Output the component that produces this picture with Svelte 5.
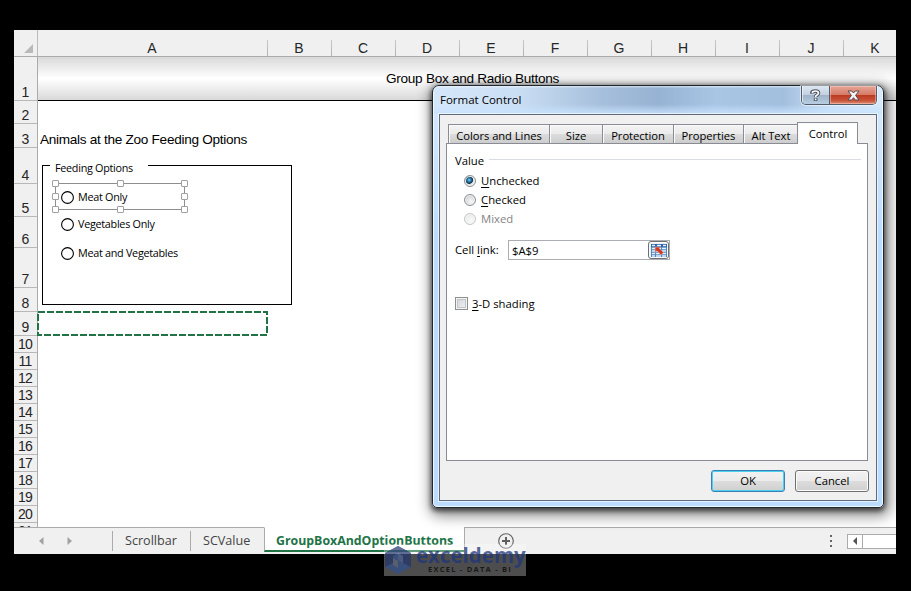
<script>
	const columns = ['A', 'B', 'C', 'D', 'E', 'F', 'G', 'H', 'I', 'J', 'K']

	const row_heights = [44, 23, 24, 36, 33, 31, 40, 24, 24, 17, 17, 17, 17, 17, 17, 17, 17, 17, 17, 17, 17]

	const options = [
		{ label: 'Meat Only', kind: 'first' },
		{ label: 'Vegetables Only', kind: 'second' },
		{ label: 'Meat and Vegetables', kind: 'third' }
	]

	const handles = ['nw', 'n', 'ne', 'w', 'e', 'sw', 's', 'se']

	const tabs = [
		{ name: 'Colors and Lines', id: 'colors' },
		{ name: 'Size', id: 'size' },
		{ name: 'Protection', id: 'protection' },
		{ name: 'Properties', id: 'properties' },
		{ name: 'Alt Text', id: 'alt' },
		{ name: 'Control', id: 'control' }
	]

	const values = [
		{ key: 'U', rest: 'nchecked' },
		{ key: 'C', rest: 'hecked' },
		{ key: '', rest: 'Mixed', disabled: true }
	]

	let active_tab = $state('control')
	let value = $state('nchecked')
</script>

<div class="screen">
	<div class="workbook">
		<div class="col-headers">
			<div class="corner">
				<svg width="9" height="9" viewBox="0 0 9 9"><path d="M9 0V9H0Z" fill="#b9b9b9" /></svg>
			</div>
			{#each columns as column}
				<div class="col-header" class:wide={column == 'A'}>{column}</div>
			{/each}
		</div>

		<div class="grid">
			<div class="row-headers">
				{#each row_heights as height, i}
					<div class="row-header" style="height: {height}px">{i + 1}</div>
				{/each}
			</div>
			<div class="sheet">
				<div class="title-row"><span>Group Box and Radio Buttons</span></div>
				<div class="heading">Animals at the Zoo Feeding Options</div>

				<!-- form controls float over the cells -->
				<div class="group-box">
					<span class="legend">Feeding Options</span>
					{#each options as option}
						<div class="option {option.kind}">
							<svg width="13" height="13" viewBox="0 0 13 13">
								<circle cx="6.5" cy="6.5" r="5.9" fill="#fff" stroke="#000" stroke-width="1.1" />
							</svg>
							<span>{option.label}</span>
						</div>
					{/each}
					<div class="selection">
						{#each handles as handle}
							<i class="handle {handle}"></i>
						{/each}
					</div>
				</div>

				<svg class="marquee" width="231" height="26" viewBox="0 0 231 26">
					<rect
						x="1"
						y="1"
						width="229"
						height="23"
						fill="none"
						stroke="#217346"
						stroke-width="2"
						stroke-dasharray="7 2"
					/>
				</svg>
			</div>
		</div>

		<div class="sheet-bar">
			<div class="sheet-nav">
				<svg width="5" height="8" viewBox="0 0 5 8"><path d="M4.5 0V8L0 4Z" fill="#a2a2a2" /></svg>
				<svg width="5" height="8" viewBox="0 0 5 8"><path d="M.5 0V8L5 4Z" fill="#a2a2a2" /></svg>
			</div>
			<div class="sheet-tab scrollbar-tab"><span>Scrollbar</span></div>
			<div class="sheet-tab scvalue-tab"><span>SCValue</span></div>
			<div class="sheet-tab current"><span>GroupBoxAndOptionButtons</span></div>
			<div class="sheet-rest">
				<svg class="add" width="16" height="16" viewBox="0 0 16 16" fill="none" stroke="#5f5f5f">
					<circle cx="8" cy="8" r="7.3" stroke-width="1.1" />
					<path d="M8 4V12M4 8H12" stroke-width="2" />
				</svg>
				<div class="grip"><i></i><i></i><i></i></div>
				<div class="h-scroll">
					<div class="h-arrow">
						<svg width="4" height="8" viewBox="0 0 4 8"><path d="M4 0V8L0 4Z" fill="#555" /></svg>
					</div>
					<div class="h-thumb"></div>
				</div>
			</div>
		</div>

		<div class="dialog" role="dialog" aria-label="Format Control">
			<div class="title-bar">
				<span class="title">Format Control</span>
				<div class="caption-buttons">
					<div class="help">
						<svg width="11" height="13" viewBox="0 0 11 13" fill="none">
							<path d="M2 4.8V3.2Q2.6 2 5.5 2T8.5 4Q8.5 5.3 7 6Q5.6 6.6 5.6 8M5.6 9V12" stroke="#4b5260" stroke-width="3.6" />
							<path d="M2.5 4.3V3.2Q2.8 2 5.5 2T8.5 4Q8.5 5.3 7 6Q5.6 6.6 5.6 8M5.6 9.6V11.3" stroke="#fff" stroke-width="1.7" />
						</svg>
					</div>
					<div class="close">
						<svg width="13" height="11" viewBox="0 0 13 11">
							<path
								d="M1 1H4.7L6.5 3L8.3 1H12L8.6 5.4L12 10H8.3L6.5 7.7L4.7 10H1L4.4 5.4Z"
								fill="#f4f4f4"
								stroke="#5b4a52"
							/>
						</svg>
					</div>
				</div>
			</div>

			<div class="client">
				<div class="tabs">
					{#each tabs as tab}
						<div
							class="tab {tab.id}"
							class:active={active_tab == tab.id}
							role="tab"
							tabindex="-1"
							aria-selected={active_tab == tab.id}
							onclick={() => (active_tab = tab.id)}
							onkeydown={() => {}}
						>
							<span>{tab.name}</span>
						</div>
					{/each}
				</div>

				<div class="page">
					<div class="section"><span>Value</span><hr /></div>
					<div class="radios">
						{#each values as item}
							<div
								class="radio"
								class:disabled={item.disabled}
								role="radio"
								tabindex="-1"
								aria-checked={value == item.rest}
								onclick={() => {
									if (!item.disabled) value = item.rest
								}}
								onkeydown={() => {}}
							>
								<i class="dot" class:checked={value == item.rest}></i>
								<span><u>{item.key}</u>{item.rest}</span>
							</div>
						{/each}
					</div>
					<div class="link-row">
						<span class="link-label">Cell <u>l</u>ink:</span>
						<div class="link-field">
							<span>$A$9</span>
							<div class="picker">
								<svg width="16" height="13" viewBox="0 0 16 13">
									<rect width="16" height="13" fill="#4f86c6" />
									<rect width="16" height="3" fill="#2c64ae" />
									<path
										d="M1 1.5H4M6 1.5H10M12 1.5H15M1 4.5H4M5 4.5H10M11 4.5H15M1 7H4M5 7H10M11 7H15M1 9.5H4M5 9.5H10M11 9.5H15M1 12H4M5 12H10M11 12H15"
										stroke="#e6f1fc"
										stroke-width="1.5"
									/>
									<path d="M4 3H9.5L8.3 4.5L12.5 8.6L10 11L6 6.8L4.4 8.3Z" fill="#cf3b22" stroke="#f3b7a4" stroke-width=".5" />
								</svg>
							</div>
						</div>
					</div>
					<div class="shading"><i class="box"></i><span><u>3</u>-D shading</span></div>
				</div>

				<div class="buttons">
					<div class="button default"><span>OK</span></div>
					<div class="button"><span>Cancel</span></div>
				</div>
			</div>
		</div>
	</div>

	<div class="watermark">
		<svg width="28" height="30" viewBox="0 0 28 30">
			<path d="M14 1L27 8V22L14 29L1 22V8Z" fill="#31508f" />
			<path d="M14 1L27 8V22L19 18V11L14 8L9 11V18L1 22V8Z" fill="#22366f" />
			<path d="M9 13L14 16V23L9 20Z" fill="#5d6878" />
			<path d="M14 8L19 11V18L14 15Z" fill="#4b6096" />
		</svg>
		<div class="brand">
			<span class="name">exceldemy</span>
			<span class="tagline">EXCEL - DATA - BI</span>
		</div>
	</div>
</div>

<style>
	:global(body) {
		margin: 0;
		background: #000;
	}
	.screen {
		position: relative;
		width: 911px;
		height: 591px;
		box-sizing: border-box;
		padding: 30px 15px 37px 14px;
		background: #000;
		overflow: hidden;
		font-family: 'Open Sans', 'Noto Sans', sans-serif;
		font-size: 11.3px;
		color: #000;
		white-space: nowrap;
		cursor: default;
	}
	.screen * {
		box-sizing: border-box;
	}
	.workbook {
		position: relative;
		display: flex;
		flex-direction: column;
		width: 882px;
		height: 524px;
		background: #fff;
		overflow: hidden;
	}

	/* column and row headers */
	.col-headers {
		display: flex;
		height: 27px;
		flex: none;
		background: #f0f0f0;
		border-bottom: 1px solid #ababab;
		font-family: 'Liberation Sans', Arial, sans-serif;
		font-size: 14px;
		color: #262626;
	}
	.corner {
		flex: none;
		display: flex;
		align-items: flex-end;
		justify-content: flex-end;
		width: 24px;
		padding: 0 4px 3px 0;
		border-right: 1px solid #bbb;
	}
	.col-header {
		flex: none;
		width: 64px;
		padding: 10px 2px 0 0;
		line-height: 17px;
		text-align: center;
		background: linear-gradient(#c9c9c9, #b1b1b1) right bottom / 1px 16px no-repeat;
	}
	.col-header.wide {
		width: 230px;
	}
	.grid {
		display: flex;
		height: 470px;
		flex: none;
		overflow: hidden;
	}
	.row-headers {
		flex: none;
		width: 24px;
		background: #f0f0f0;
		border-right: 1px solid #ababab;
		font-family: 'Liberation Sans', Arial, sans-serif;
		font-size: 14px;
		letter-spacing: -0.7px;
		color: #262626;
	}
	.row-header {
		display: flex;
		align-items: flex-end;
		justify-content: center;
		line-height: 15px;
		padding-right: 1px;
		border-bottom: 1px solid #b8b8b8;
	}
	.sheet {
		position: relative;
		flex: 1;
		font-family: 'Liberation Sans', Arial, sans-serif;
		font-size: 13.6px;
	}
	.title-row {
		height: 44px;
		border-bottom: 1px solid #000;
		background: linear-gradient(#d9d9d9, #fff 50%, #d9d9d9);
		padding-left: 348px;
		line-height: 43px;
		letter-spacing: -0.28px;
	}
	.heading {
		padding: 23px 0 0 2px;
		line-height: 31px;
		letter-spacing: -0.29px;
	}

	/* group box */
	.group-box {
		position: absolute;
		left: 4px;
		top: 108px;
		width: 250px;
		height: 140px;
		border: 1px solid #000;
		font-family: 'Open Sans', 'Noto Sans', sans-serif;
		font-size: 10.8px;
		letter-spacing: -0.28px;
	}
	.legend {
		position: absolute;
		left: 7px;
		top: -7px;
		width: 98px;
		padding-left: 5px;
		line-height: 18px;
		background: #fff;
	}
	.option {
		position: absolute;
		left: 18px;
		display: flex;
		align-items: center;
		gap: 4px;
		height: 14px;
	}
	.option span {
		padding-bottom: 2px;
	}
	.first {
		top: 24px;
	}
	.second {
		top: 51px;
	}
	.third {
		top: 80px;
	}
	.selection {
		position: absolute;
		left: 12px;
		top: 17px;
		width: 130px;
		height: 27px;
		border: 1px solid #8e8e8e;
	}
	.handle {
		position: absolute;
		width: 7px;
		height: 7px;
		background: #fff;
		border: 1px solid #a0a0a0;
		border-radius: 1px;
	}
	.nw,
	.n,
	.ne {
		top: -4px;
	}
	.w,
	.e {
		top: 9px;
	}
	.sw,
	.s,
	.se {
		bottom: -4px;
	}
	.nw,
	.w,
	.sw {
		left: -4px;
	}
	.n,
	.s {
		left: 61px;
	}
	.ne,
	.e,
	.se {
		right: -4px;
	}
	.marquee {
		position: absolute;
		left: -1px;
		top: 254px;
	}

	/* sheet tabs */
	.sheet-bar {
		display: flex;
		height: 27px;
		flex: none;
		background: #f0f0f0;
		color: #444;
		font-size: 12.6px;
	}
	.sheet-nav {
		display: flex;
		align-items: center;
		gap: 23px;
		width: 99px;
		padding-left: 25px;
		border-top: 1px solid #ababab;
		background: linear-gradient(#ababab, #ababab) right 3px / 1px 20px no-repeat;
	}
	.sheet-tab {
		border-top: 1px solid #ababab;
		padding-left: 12px;
		line-height: 25px;
	}
	.scrollbar-tab {
		width: 78px;
		background: linear-gradient(#ababab, #ababab) right 3px / 1px 20px no-repeat;
	}
	.scvalue-tab {
		width: 73px;
	}
	.sheet-tab.current {
		width: 200px;
		margin-bottom: 2px;
		padding-left: 11px;
		background: #fff;
		border-top-color: #fff;
		border-bottom: 2px solid #217346;
		border-left: 1px solid #ababab;
		font-weight: 700;
		font-size: 12.35px;
		color: #217346;
	}
	.sheet-rest {
		flex: 1;
		display: flex;
		align-items: center;
		border-top: 1px solid #ababab;
		border-left: 1px solid #ababab;
	}
	.add {
		margin-left: 33px;
	}
	.grip {
		display: flex;
		flex-direction: column;
		gap: 3px;
		margin: 0 15px 0 316px;
	}
	.grip i {
		width: 2px;
		height: 2px;
		background: #666;
	}
	.h-scroll {
		flex: 1;
		display: flex;
		height: 15px;
		border: 1px solid #ababab;
		border-right: 0;
		background: #fff;
	}
	.h-arrow {
		display: flex;
		align-items: center;
		justify-content: center;
		width: 15px;
		border-right: 1px solid #ababab;
	}

	/* dialog window */
	.dialog {
		position: absolute;
		left: 418px;
		top: 55px;
		width: 452px;
		height: 423px;
		padding: 0 6px 6px;
		border: 1px solid #20272f;
		border-radius: 7px 7px 5px 5px;
		background: linear-gradient(#d9eafb, #bbdcff 36%, #bbdcff);
		box-shadow:
			inset 0 0 0 1px #f0f8ff,
			0 2px 5px 1px rgba(0, 0, 0, 0.6),
			2px 4px 14px 4px rgba(0, 0, 0, 0.45);
	}
	.title-bar {
		display: flex;
		justify-content: space-between;
		height: 28px;
		margin: 0 -5px;
		padding: 0 5px 0 6px;
		border-radius: 6px 6px 0 0;
		background:
			linear-gradient(rgba(255, 255, 255, 0.55), transparent 8%, transparent 65%, rgba(200, 227, 255, 0.9)),
			linear-gradient(90deg, #d5e7fa, #cbdff4 18%, #a5bedb 38%, #97b3d3 50%, #a9c6e5 63%, #a3bfde 78%, #c8def5 88%, #d7e9fa);
	}
	.title {
		line-height: 27px;
		font-size: 11.5px;
	}
	.caption-buttons {
		display: flex;
		height: 19px;
		border: 1px solid #515c6c;
		border-top: 0;
		border-radius: 0 0 5px 5px;
		overflow: hidden;
		box-shadow: 0 0 0 1px rgba(255, 255, 255, 0.55);
	}
	.help,
	.close {
		display: flex;
		align-items: center;
		justify-content: center;
	}
	.help {
		width: 28px;
		border-right: 1px solid #515c6c;
		background: linear-gradient(#dce7f2, #c3d0df 48%, #9eb1c6 50%, #b9cee3);
		box-shadow: inset 1px 0 rgba(255, 255, 255, 0.6);
	}
	.close {
		width: 46px;
		background: linear-gradient(#e7a596, #d57b68 48%, #ba3a20 50%, #c8523a 80%, #dd8c70);
		box-shadow: inset 0 0 0 1px rgba(255, 220, 210, 0.45);
	}
	.client {
		height: 387px;
		padding: 7px 7px 0 6px;
		border: 1px solid #5f6b7b;
		background: #f0f0f0;
		box-shadow: 0 0 0 1px rgba(255, 255, 255, 0.6);
	}
	.tabs {
		display: flex;
		align-items: flex-end;
		height: 21px;
		padding-left: 2px;
		font-size: 11.2px;
		letter-spacing: -0.04px;
	}
	.tab {
		display: flex;
		align-items: center;
		justify-content: center;
		height: 19px;
		padding-top: 2px;
		border: 1px solid #898c95;
		border-left-width: 0;
		border-bottom: 0;
		background: linear-gradient(#f3f3f3, #ebebeb 48%, #dcdcdc 50%, #cdcdcd);
		box-shadow: inset 1px 1px #fafafa;
	}
	.tab.colors {
		width: 102px;
		border-left-width: 1px;
	}
	.size {
		width: 53px;
	}
	.protection {
		width: 71px;
	}
	.properties {
		width: 70px;
	}
	.alt {
		width: 55px;
	}
	.control {
		width: 60px;
	}
	.tab.active {
		z-index: 1;
		width: 61px;
		height: 22px;
		margin-bottom: -1px;
		margin-left: -2px;
		padding: 0 0 0 1px;
		border-left-width: 1px;
		background: #fff;
	}
	.page {
		height: 318px;
		width: 422px;
		padding: 7px 6px 0 8px;
		border: 1px solid #898c95;
		background: #fff;
	}
	.section {
		display: flex;
		align-items: center;
		gap: 5px;
		height: 18px;
	}
	.section hr {
		flex: 1;
		height: 1px;
		margin: 0 0 1px;
		border: 0;
		background: #d9dce2;
	}
	.radios {
		padding: 2px 0 0 9px;
	}
	.radio {
		display: flex;
		align-items: center;
		gap: 5px;
		height: 19px;
	}
	.dot {
		width: 12px;
		height: 12px;
		border: 1px solid #8a8e90;
		border-radius: 50%;
		background: radial-gradient(circle at 60% 65%, #f8f8f8, #cdd0d2 75%);
		box-shadow: inset 0 0 0 1px #f4f4f4;
	}
	.dot.checked {
		background: radial-gradient(circle at 42% 40%, #8adcf5 0, #2a7fae 20%, #10364f 42%, #d4dade 50%, #eee 65%);
	}
	.disabled {
		color: #838383;
	}
	.disabled .dot {
		opacity: 0.5;
	}
	u {
		text-underline-offset: 2px;
	}
	.link-row {
		display: flex;
		align-items: center;
		height: 20px;
		margin-top: 12px;
	}
	.link-label {
		width: 53px;
		padding-bottom: 1px;
	}
	.link-field {
		display: flex;
		align-items: center;
		justify-content: space-between;
		width: 162px;
		height: 20px;
		padding-left: 3px;
		border: 1px solid #abadb3;
	}
	.picker {
		display: flex;
		align-items: center;
		justify-content: center;
		width: 21px;
		height: 18px;
		border: 1px solid #707070;
		border-radius: 3px;
		background: #eee;
		box-shadow: inset 0 0 0 1px #fbfbfb;
	}
	.shading {
		display: flex;
		align-items: center;
		gap: 4px;
		margin-top: 35px;
		height: 16px;
	}
	.box {
		width: 13px;
		height: 13px;
		border: 1px solid #8e8f8f;
		background: linear-gradient(135deg, #cbcfd5, #f6f6f6);
		box-shadow:
			inset 0 0 0 1px #f4f4f4,
			inset 0 0 0 2px #c3c6c8;
	}
	.buttons {
		display: flex;
		justify-content: flex-end;
		gap: 10px;
		padding-top: 9px;
	}
	.button {
		display: flex;
		align-items: center;
		justify-content: center;
		width: 74px;
		height: 22px;
		padding-bottom: 2px;
		border: 1px solid #707070;
		border-radius: 3px;
		background: linear-gradient(#f2f2f2, #ebebeb 48%, #dddddd 50%, #cfcfcf);
		box-shadow: inset 0 0 0 1px #fbfbfb;
	}
	.button.default {
		border-color: #3c7fb1;
		box-shadow: inset 0 0 0 1px #48d1f3;
	}

	/* translucent site logo */
	.watermark {
		position: absolute;
		left: 384px;
		top: 544px;
		display: flex;
		width: 142px;
		height: 32px;
		background: rgba(255, 255, 255, 0.3);
	}
	.watermark svg {
		flex: none;
		margin-top: 1px;
		opacity: 0.7;
	}
	.brand {
		display: flex;
		flex-direction: column;
		margin-left: 4px;
	}
	.name {
		line-height: 22px;
		font-size: 20.5px;
		font-weight: 700;
		color: rgba(31, 54, 122, 0.75);
	}
	.tagline {
		margin-left: 12px;
		line-height: 6px;
		font-size: 7.5px;
		font-weight: 700;
		letter-spacing: 1.25px;
		color: rgba(0, 0, 0, 0.7);
	}
</style>
